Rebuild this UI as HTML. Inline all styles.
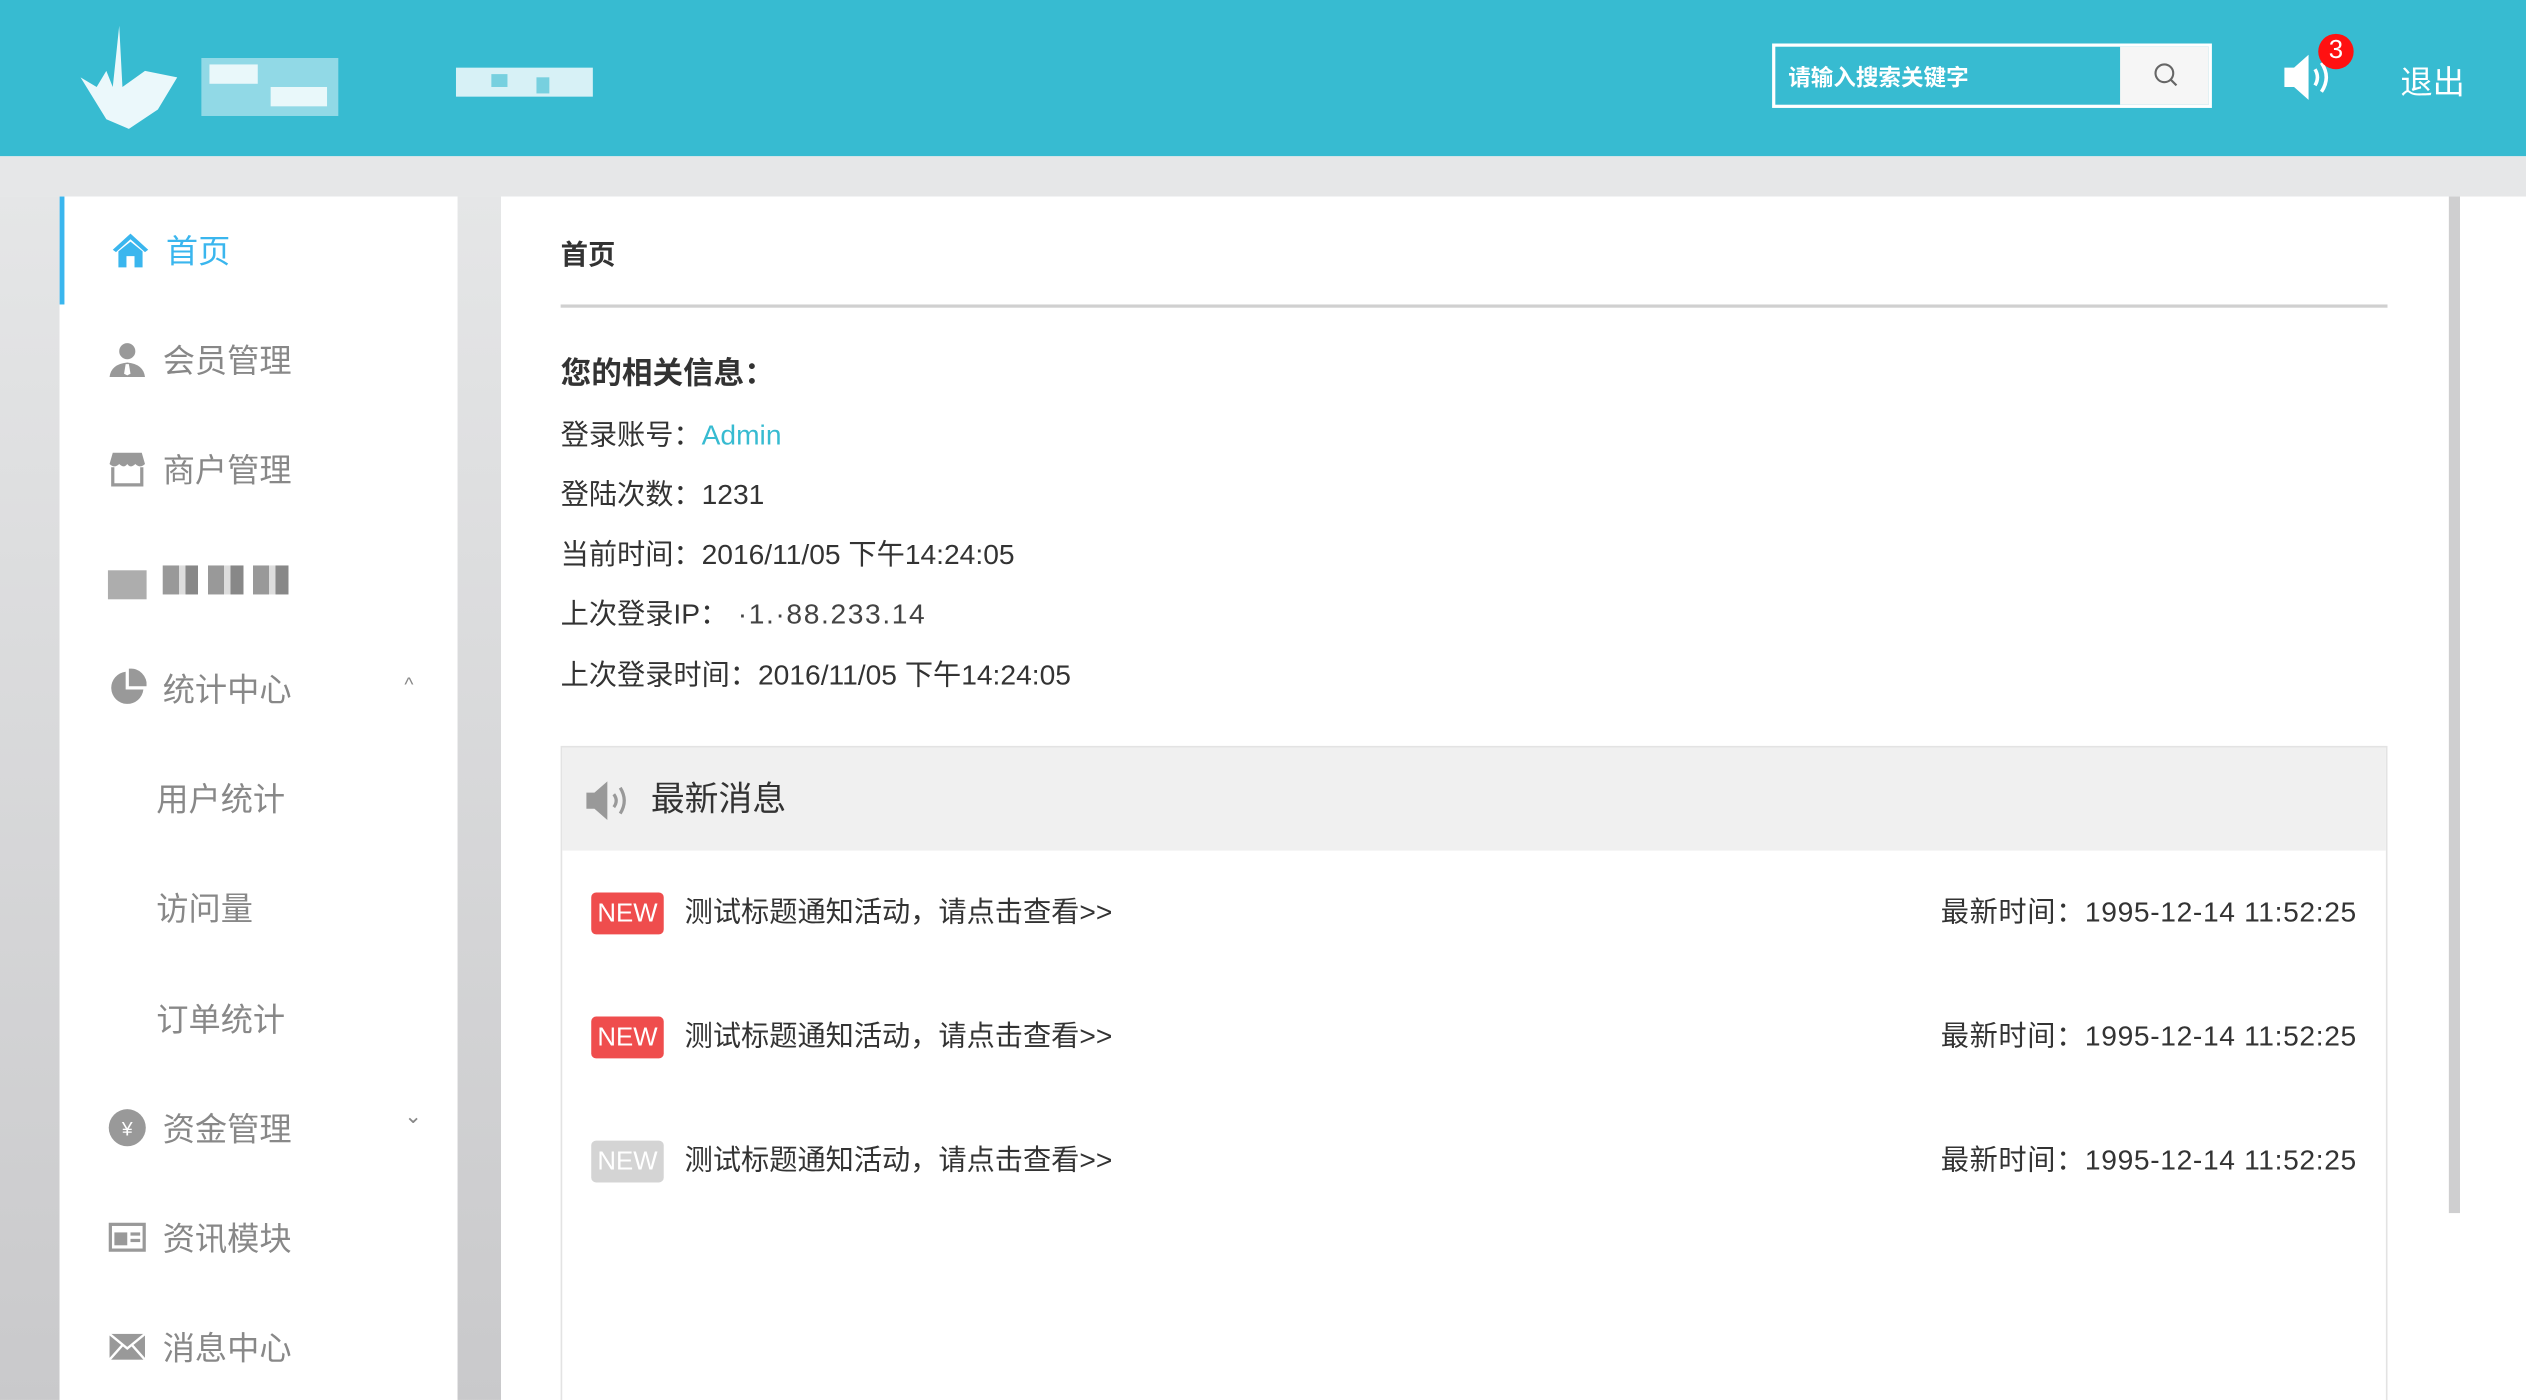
<!DOCTYPE html>
<html><head><meta charset="utf-8"><style>
*{margin:0;padding:0;box-sizing:border-box}
html,body{width:2526px;height:1400px;overflow:hidden;background:#fff}
#w{width:1568px;height:869px;transform:scale(1.611);transform-origin:0 0;position:relative;font-family:"Liberation Sans","Noto Sans CJK SC",sans-serif;color:#333;background:#fff}
.a{position:absolute}
#hd{left:0;top:0;width:1568px;height:97px;background:#37bbd1}
#gl{left:0;top:97px;width:1568px;height:25px;background:#e6e7e8}
#gside{left:0;top:122px;width:37px;height:747px;background:linear-gradient(#e5e6e7,#c9c9cb)}
#gmid{left:284px;top:122px;width:27px;height:747px;background:linear-gradient(#e5e6e7,#c9c9cb)}
#gr{left:1520px;top:122px;width:7px;height:631px;background:#cfcfd0}
#side{left:37px;top:122px;width:247px;height:747px;background:#fff}
.it{position:absolute;left:0;width:247px;height:68px;font-size:20px;color:#888;display:flex;align-items:center}
.it .ic{position:absolute;left:30px;top:21px;width:24px;height:24px}
.it span{position:absolute;left:64px;top:18px}
.sub span{left:60px}
#main{left:311px;top:122px;width:1209px;height:747px;background:#fff}
.ln{position:absolute;left:37px;font-size:17.5px;color:#333;white-space:nowrap}
.msg{position:absolute;left:37px;top:341px;width:1134px;height:420px;border:1px solid #e3e3e3}
.mh{height:64px;background:#f0f0f0;position:relative}
.row{position:absolute;left:18px;right:18px;height:28px;font-size:17.5px;color:#333}
.new{position:absolute;left:0;top:1px;width:45px;height:26px;border-radius:3px;background:#ef4d4d;color:#fff;font-size:16px;text-align:center;line-height:27px}
.row .t{position:absolute;left:58px;top:0px}
.row .tm{position:absolute;right:0;top:0px;letter-spacing:.4px}
</style></head><body><div id="w">
<div class="a" id="hd"></div>
<svg class="a" style="left:40px;top:14px" width="180" height="70"><path d="M34 2 L36 40 L50 30 L70 34 L58 54 L40 66 L26 60 L10 34 L20 40 L26 30 L30 40Z" fill="#fff" opacity=".9"/><rect x="85" y="22" width="85" height="36" fill="#fff" opacity=".45"/><rect x="90" y="26" width="30" height="12" fill="#fff" opacity=".8"/><rect x="128" y="40" width="35" height="12" fill="#fff" opacity=".8"/></svg>
<svg class="a" style="left:283px;top:40px" width="90" height="22"><rect x="0" y="2" width="85" height="18" fill="#fff" opacity=".8"/><rect x="22" y="6" width="10" height="8" fill="#37bbd1" opacity=".6"/><rect x="50" y="8" width="8" height="10" fill="#37bbd1" opacity=".6"/></svg>
<div class="a" style="left:1100px;top:27px;width:273px;height:40px;border:2px solid #fff;background:#37bbd1"></div>
<div class="a" style="left:1316px;top:29px;width:55px;height:36px;background:#f6f6f6"></div>
<svg class="a" style="left:1336px;top:38px" width="18" height="18"><circle cx="7.5" cy="7.5" r="5.5" fill="none" stroke="#666" stroke-width="1.3"/><path d="M11.5 11.5 L15 15" stroke="#666" stroke-width="1.4"/></svg>
<div class="a" style="left:1110px;top:38px;font-size:14px;font-weight:bold;color:#fff">请输入搜索关键字</div>
<svg class="a" style="left:1416px;top:32px" width="40" height="32"><path d="M2 10 H8 L17 2 V30 L8 22 H2Z" fill="#fff"/><path d="M21 11 Q24 16 21 21" fill="none" stroke="#fff" stroke-width="2.2"/><path d="M25 7 Q31 16 25 25" fill="none" stroke="#fff" stroke-width="2.2"/></svg>
<div class="a" style="left:1439px;top:21px;width:22px;height:22px;border-radius:50%;background:#f11;color:#fff;font-size:16px;text-align:center;line-height:22px">3</div>
<div class="a" style="left:1490px;top:35px;font-size:20px;color:#fff">退出</div>

<div class="a" id="gl"></div>
<div class="a" id="gside"></div>
<div class="a" id="gmid"></div>
<div class="a" id="gr"></div>

<div class="a" id="side">
 <div class="a" style="left:0;top:0;width:3px;height:67px;background:#3ab6ee"></div>
 <div class="it" style="top:0;color:#3ab6ee"><svg class="ic" viewBox="0 0 24 24" style="left:32px"><path d="M12 2 L1 12 L3 13.5 L12 5.5 L21 13.5 L23 12Z M4.5 13 L12 7 L19.5 13 V23 H14.5 V16 H9.5 V23 H4.5Z" fill="#3ab6ee"/></svg><span style="left:66px">首页</span></div>
 <div class="it" style="top:68px"><svg class="ic" viewBox="0 0 24 24"><circle cx="12" cy="7" r="5" fill="#999"/><path d="M1 23 Q2 15 12 14 Q22 15 23 23Z" fill="#999"/><path d="M11 15 h2 l1 6 l-2 1 l-2 -1z" fill="#fff"/></svg><span>会员管理</span></div>
 <div class="it" style="top:136px"><svg class="ic" viewBox="0 0 24 24"><path d="M3 2 H21 L23 9 Q20 12 17 9 Q14 12 12 9 Q10 12 7 9 Q4 12 1 9Z" fill="#999"/><path d="M3 11 V22 H21 V11" fill="none" stroke="#999" stroke-width="2"/></svg><span>商户管理</span></div>
 <div class="it" style="top:204px"><div class="ic" style="background:#999;height:18px;top:28px;opacity:.8"></div><span style="width:80px;height:18px;top:25px;background:repeating-linear-gradient(90deg,#999 0 10px,#ddd 10px 14px,#888 14px 22px,#fff 22px 28px)"></span></div>
 <div class="it" style="top:272px"><svg class="ic" viewBox="0 0 24 24"><path d="M11 2 A10 10 0 1 0 22 13 H11Z" fill="#999"/><path d="M13 0 A10 10 0 0 1 24 11 H13Z" fill="#999"/></svg><span>统计中心</span><span style="left:214px;font-size:12px;top:24px">^</span></div>
 <div class="it sub" style="top:340px"><span>用户统计</span></div>
 <div class="it sub" style="top:408px"><span>访问量</span></div>
 <div class="it sub" style="top:477px"><span>订单统计</span></div>
 <div class="it" style="top:545px"><svg class="ic" viewBox="0 0 24 24"><circle cx="12" cy="12" r="11.5" fill="#999"/><text x="12" y="17" font-size="12" text-anchor="middle" fill="#fff" font-family="Liberation Sans">¥</text></svg><span>资金管理</span><span style="left:214px;font-size:13px;top:18px">⌄</span></div>
 <div class="it" style="top:613px"><svg class="ic" viewBox="0 0 24 24"><rect x="1.5" y="4" width="21" height="16" fill="none" stroke="#999" stroke-width="2"/><rect x="4" y="9" width="8" height="8" fill="#999"/><rect x="14" y="9" width="6" height="2" fill="#999"/><rect x="14" y="13" width="6" height="2" fill="#999"/></svg><span>资讯模块</span></div>
 <div class="it" style="top:681px"><svg class="ic" viewBox="0 0 24 24"><rect x="1" y="4" width="22" height="16" fill="#999"/><path d="M1 4 L12 13 L23 4 M1 20 L9 11 M23 20 L15 11" fill="none" stroke="#fff" stroke-width="1.5"/></svg><span>消息中心</span></div>
</div>

<div class="a" id="main">
 <div class="ln" style="top:22px;font-weight:bold;font-size:17px">首页</div>
 <div class="a" style="left:37px;top:67px;width:1134px;height:2px;background:#d0d0d0"></div>
 <div class="ln" style="top:95px;font-weight:bold;font-size:19px">您的相关信息：</div>
 <div class="ln" style="top:135px">登录账号：<span style="color:#37bbd1">Admin</span></div>
 <div class="ln" style="top:172px">登陆次数：1231</div>
 <div class="ln" style="top:209px">当前时间：2016/11/05 下午14:24:05</div>
 <div class="ln" style="top:246px">上次登录IP：<span style="color:#444;letter-spacing:1px">&nbsp;·1.·88.233.14</span></div>
 <div class="ln" style="top:284px">上次登录时间：2016/11/05 下午14:24:05</div>
 <div class="msg">
  <div class="mh"><svg class="a" style="left:14px;top:20px" width="30" height="26"><path d="M1 8 H6 L14 1 V25 L6 18 H1Z" fill="#999"/><path d="M18 9 Q21 13 18 17" fill="none" stroke="#999" stroke-width="2"/><path d="M22 5 Q27 13 22 21" fill="none" stroke="#999" stroke-width="2"/></svg><div class="a" style="left:55px;top:16px;font-size:21px;color:#333">最新消息</div></div>
  <div class="row" style="top:89px"><div class="new">NEW</div><div class="t">测试标题通知活动，请点击查看&gt;&gt;</div><div class="tm">最新时间：1995-12-14 11:52:25</div></div>
  <div class="row" style="top:166px"><div class="new">NEW</div><div class="t">测试标题通知活动，请点击查看&gt;&gt;</div><div class="tm">最新时间：1995-12-14 11:52:25</div></div>
  <div class="row" style="top:243px"><div class="new" style="background:#d4d4d4">NEW</div><div class="t">测试标题通知活动，请点击查看&gt;&gt;</div><div class="tm">最新时间：1995-12-14 11:52:25</div></div>
 </div>
</div>
</div></body></html>
